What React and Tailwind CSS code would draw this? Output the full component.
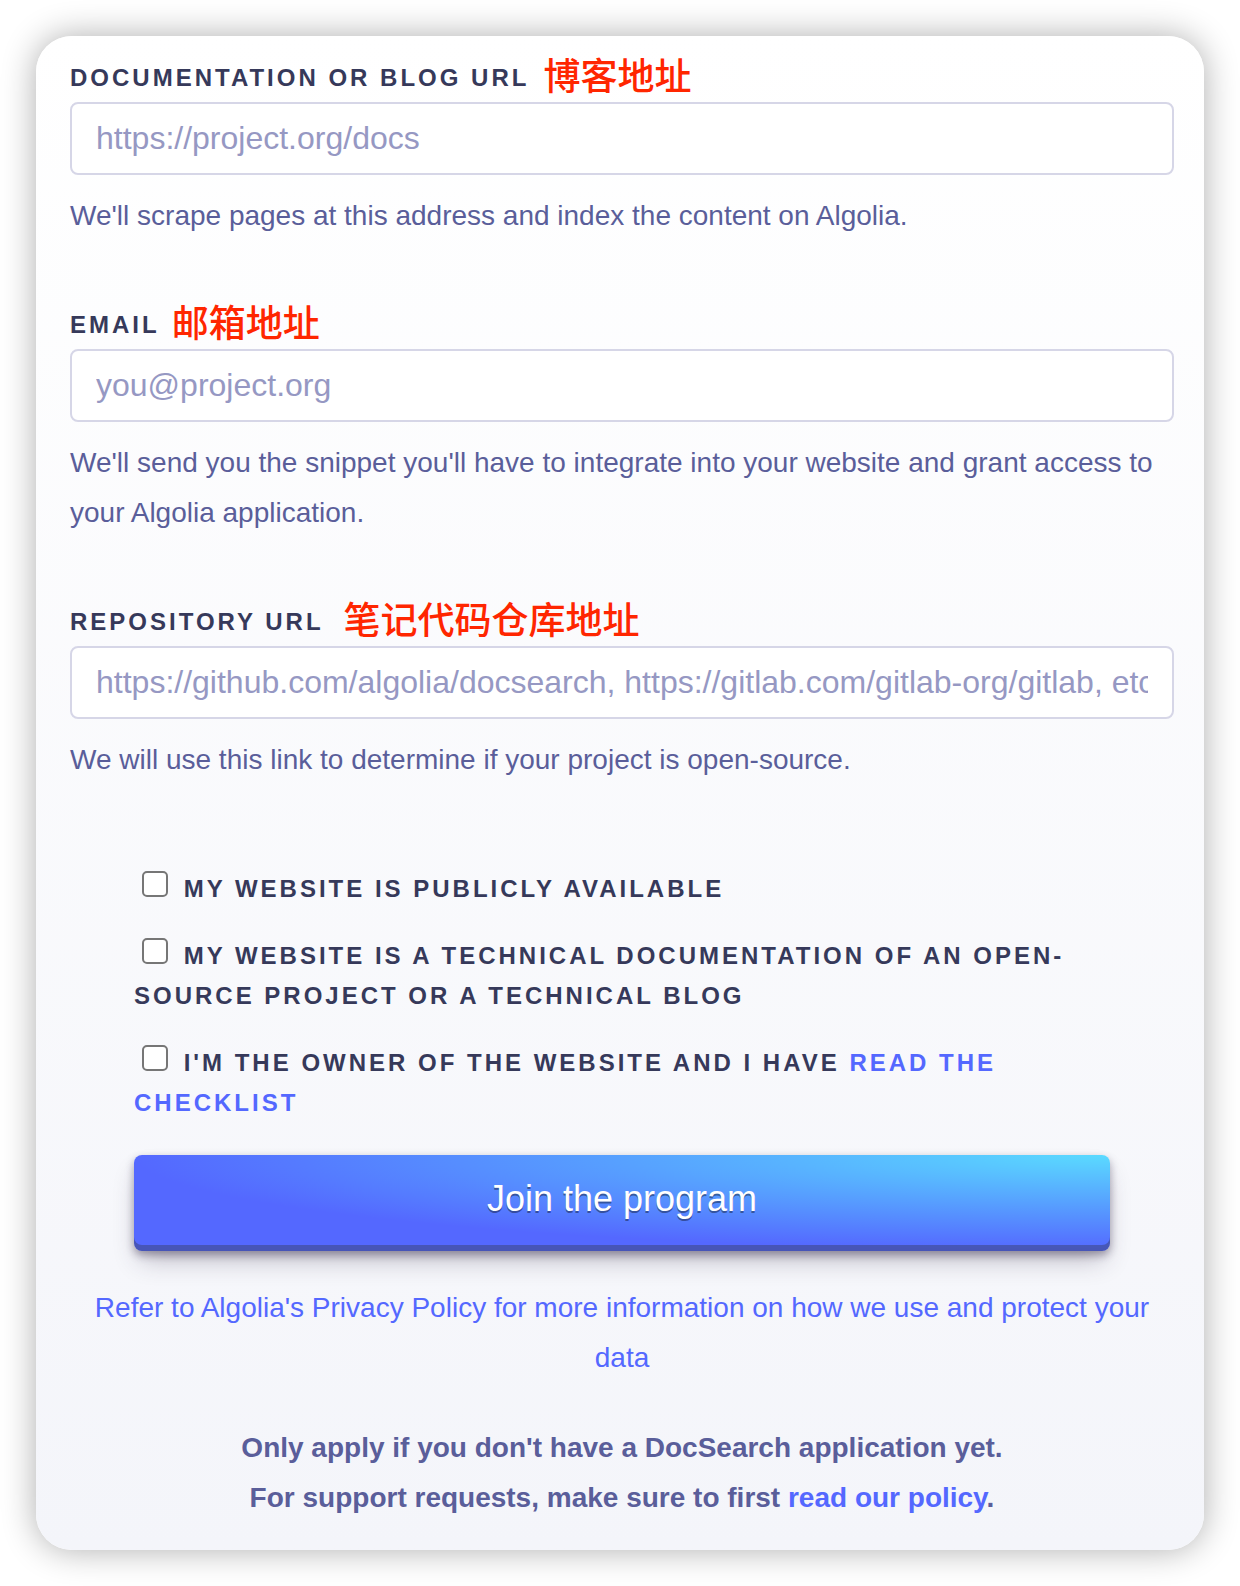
import React from "react";

const labelText = "text-[24px] font-bold uppercase tracking-[3px] text-[#36395a]";
const linkText = "text-[#5468ff] hover:underline";

const fields = [
  {
    id: "url",
    type: "url",
    label: "Documentation or blog URL",
    note: "博客地址",
    noteGap: "ml-3.5",
    placeholder: "https://project.org/docs",
    help: "We'll scrape pages at this address and index the content on Algolia.",
  },
  {
    id: "email",
    type: "email",
    label: "Email",
    note: "邮箱地址",
    noteGap: "ml-3",
    placeholder: "you@project.org",
    help: "We'll send you the snippet you'll have to integrate into your website and grant access to your Algolia application.",
  },
  {
    id: "repository",
    type: "url",
    label: "Repository URL",
    note: "笔记代码仓库地址",
    noteGap: "ml-5",
    placeholder: "https://github.com/algolia/docsearch, https://gitlab.com/gitlab-org/gitlab, etc.",
    help: "We will use this link to determine if your project is open-source.",
  },
];

function Field({ id, type, label, note, noteGap, placeholder, help }) {
  return (
    <div>
      <div className="flex h-12 items-center">
        <label htmlFor={id} className={labelText}>
          {label}
        </label>
        <span
          lang="zh-CN"
          className={`${noteGap} pb-2 font-['Noto_Sans_CJK_SC',sans-serif] text-[37px] leading-[48px] font-medium text-[#ff2600]`}
        >
          {note}
        </span>
      </div>
      <input
        id={id}
        type={type}
        placeholder={placeholder}
        aria-describedby={`${id}-help`}
        className="block h-[73px] w-full rounded-lg border-2 border-[#d6d6e7] bg-white px-6 text-[32px] text-[#36395a] placeholder:text-[#9698c3] placeholder:opacity-100"
      />
      <p id={`${id}-help`} className="mt-4">
        {help}
      </p>
    </div>
  );
}

function Check({ id, children }) {
  return (
    <div className={`${labelText} leading-10`}>
      <input
        id={id}
        type="checkbox"
        className="mr-1.5 ml-2 inline-block size-[26px] appearance-none rounded-[5px] border-2 border-[#767676] bg-white align-baseline checked:bg-[#5468ff]"
      />{" "}
      <label htmlFor={id}>{children}</label>
    </div>
  );
}

export default function App() {
  return (
    <main className="bg-white p-9 font-['Liberation_Sans',Arial,sans-serif] text-[28px] leading-[50px] text-[#5a5e9a]">
      <form
        className="rounded-[36px] bg-linear-to-b from-white to-[#f4f5fa] pt-[18px] pr-[30px] pb-[27px] pl-[34px] shadow-[0_0_34px_rgba(0,0,0,0.32)]"
        onSubmit={(e) => e.preventDefault()}
      >
        <div className="flex flex-col gap-[60px]">
          {fields.map((f) => (
            <Field key={f.id} {...f} />
          ))}
        </div>

        <div className="mt-[84px] flex flex-col gap-[27px] px-16">
          <Check id="public">My website is publicly available</Check>
          <Check id="docs">
            My website is a technical documentation of an open-source project or a technical blog
          </Check>
          <Check id="owner">
            I'm the owner of the website and I have{" "}
            <a href="#checklist" className={linkText}>
              read the checklist
            </a>
          </Check>
        </div>

        <div className="mt-8 px-16">
          <button
            type="submit"
            className="block h-24 w-full rounded-lg bg-[radial-gradient(100%_100%_at_100%_0,#5adaff_0,#5468ff_100%)] pb-2 text-[36px] text-white shadow-[0_4px_8px_rgba(45,35,66,0.4),0_14px_26px_-6px_rgba(45,35,66,0.3),inset_0_-6px_0_rgba(58,65,111,0.5)] [text-shadow:0_2px_0_rgba(0,0,0,0.4)]"
          >
            Join the program
          </button>
        </div>

        <p className="mt-8 text-center">
          <a href="#privacy" className={linkText}>
            Refer to Algolia's Privacy Policy for more information on how we use and protect your data
          </a>
        </p>

        <p className="mt-10 text-center font-bold">
          Only apply if you don't have a DocSearch application yet.
          <br />
          For support requests, make sure to first{" "}
          <a href="#policy" className={linkText}>
            read our policy
          </a>
          .
        </p>
      </form>
    </main>
  );
}
